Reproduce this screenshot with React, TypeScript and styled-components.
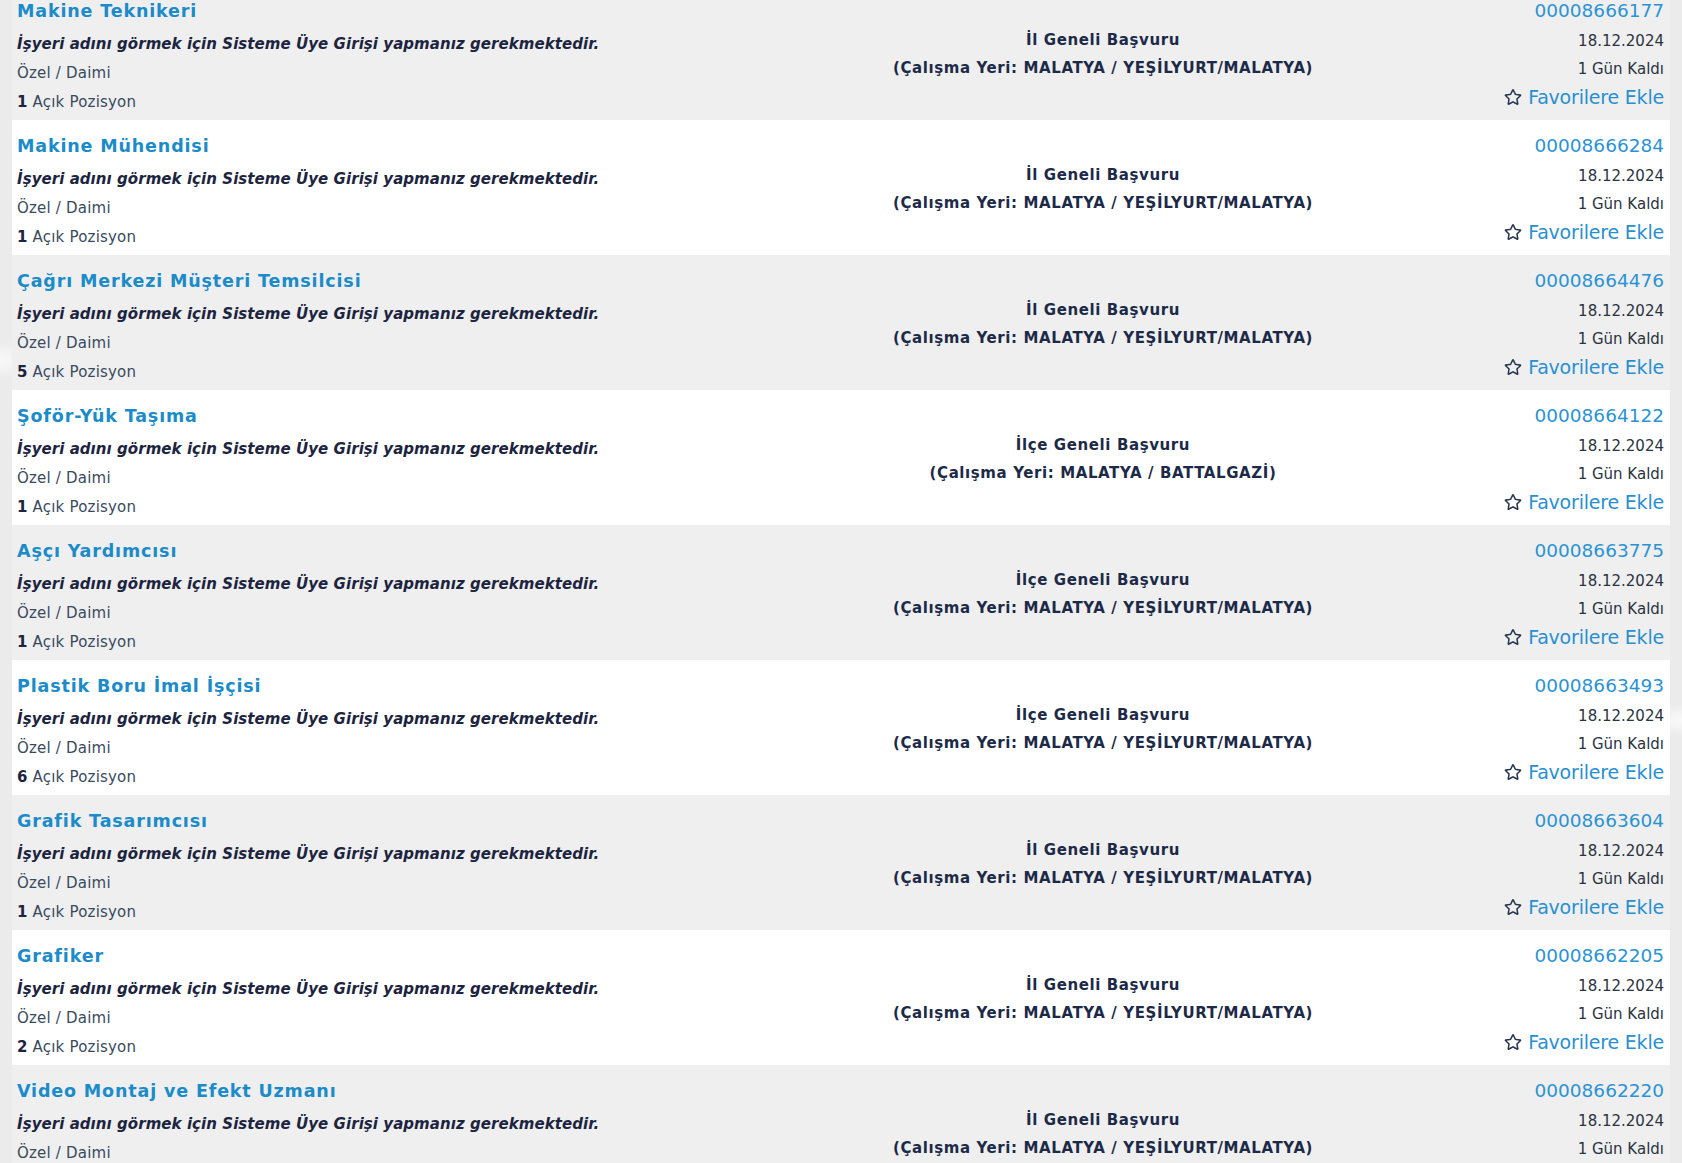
import React from "react";
import styled, { createGlobalStyle } from "styled-components";
import { FaRegStar } from "react-icons/fa";

const GlobalStyle = createGlobalStyle`
  html, body { margin: 0; padding: 0; }
  body {
    background-color: #ebebeb;
    background-image:
      radial-gradient(ellipse at 0% 30%, rgba(255,255,255,0.7) 0, rgba(255,255,255,0) 40px),
      radial-gradient(ellipse at 100% 60%, rgba(255,255,255,0.7) 0, rgba(255,255,255,0) 40px);
    font-family: "DejaVu Sans", Verdana, sans-serif;
    overflow: hidden;
  }
`;

type Job = {
  title: string;
  scope: string;
  place: string;
  code: string;
  count: number;
};

const jobs: Job[] = [
  { title: "Makine Teknikeri", scope: "İl Geneli Başvuru", place: "MALATYA / YEŞİLYURT/MALATYA", code: "00008666177", count: 1 },
  { title: "Makine Mühendisi", scope: "İl Geneli Başvuru", place: "MALATYA / YEŞİLYURT/MALATYA", code: "00008666284", count: 1 },
  { title: "Çağrı Merkezi Müşteri Temsilcisi", scope: "İl Geneli Başvuru", place: "MALATYA / YEŞİLYURT/MALATYA", code: "00008664476", count: 5 },
  { title: "Şoför-Yük Taşıma", scope: "İlçe Geneli Başvuru", place: "MALATYA / BATTALGAZİ", code: "00008664122", count: 1 },
  { title: "Aşçı Yardımcısı", scope: "İlçe Geneli Başvuru", place: "MALATYA / YEŞİLYURT/MALATYA", code: "00008663775", count: 1 },
  { title: "Plastik Boru İmal İşçisi", scope: "İlçe Geneli Başvuru", place: "MALATYA / YEŞİLYURT/MALATYA", code: "00008663493", count: 6 },
  { title: "Grafik Tasarımcısı", scope: "İl Geneli Başvuru", place: "MALATYA / YEŞİLYURT/MALATYA", code: "00008663604", count: 1 },
  { title: "Grafiker", scope: "İl Geneli Başvuru", place: "MALATYA / YEŞİLYURT/MALATYA", code: "00008662205", count: 2 },
  { title: "Video Montaj ve Efekt Uzmanı", scope: "İl Geneli Başvuru", place: "MALATYA / YEŞİLYURT/MALATYA", code: "00008662220", count: 1 },
];

const Page = styled.div`
  margin-top: -15px;
  padding: 0 12px;
  display: flex;
  flex-direction: column;
`;

const Row = styled.div<{ $alt: boolean }>`
  display: grid;
  grid-template-columns: 830px 512px 1fr;
  height: 135px;
  box-sizing: border-box;
  padding: 0 6px 0 5px;
  background: ${(p) => (p.$alt ? "#ffffff" : "#efefef")};
`;

const Left = styled.div`
  display: flex;
  flex-direction: column;
  align-items: flex-start;
  padding-top: 9px;
`;

const Title = styled.a`
  font-weight: bold;
  font-size: 17.5px;
  letter-spacing: 0.85px;
  line-height: 35px;
  color: #1b8bc9;
  text-decoration: none;
  cursor: pointer;
`;

const Notice = styled.div`
  font-weight: bold;
  font-style: italic;
  font-size: 15px;
  letter-spacing: 0.06px;
  line-height: 31px;
  color: #1c2440;
`;

const Meta = styled.div`
  font-size: 15px;
  line-height: 27px;
  letter-spacing: 0.2px;
  color: #3a4a5e;
`;

const Positions = styled(Meta)`
  margin-top: 2px;
`;

const Count = styled.b`
  color: #1c2440;
`;

const Center = styled.div`
  display: flex;
  flex-direction: column;
  justify-content: center;
  align-items: center;
  padding-top: 3px;
  font-weight: bold;
  font-size: 15px;
  letter-spacing: 0.6px;
  line-height: 28px;
  color: #1c2a48;
`;

const Right = styled.div`
  display: flex;
  flex-direction: column;
  align-items: flex-end;
  padding-top: 10px;
`;

const Code = styled.a`
  font-size: 18.5px;
  line-height: 32px;
  color: #2b93d3;
  text-decoration: none;
  cursor: pointer;
`;

const Small = styled.div`
  font-size: 15px;
  line-height: 28px;
  color: #2a3340;
`;

const Fav = styled.a`
  display: flex;
  align-items: center;
  gap: 6px;
  font-size: 19px;
  letter-spacing: -0.2px;
  line-height: 28px;
  color: #2a8fd0;
  cursor: pointer;
  svg {
    color: #263650;
    width: 18px;
    height: 18px;
  }
`;

export default function App() {
  return (
    <>
      <GlobalStyle />
      <Page>
        {jobs.map((j, i) => (
          <Row key={j.code} $alt={i % 2 === 1}>
            <Left>
              <Title>{j.title}</Title>
              <Notice>İşyeri adını görmek için Sisteme Üye Girişi yapmanız gerekmektedir.</Notice>
              <Meta>Özel / Daimi</Meta>
              <Positions>
                <Count>{j.count}</Count> Açık Pozisyon
              </Positions>
            </Left>
            <Center>
              <div>{j.scope}</div>
              <div>(Çalışma Yeri: {j.place})</div>
            </Center>
            <Right>
              <Code>{j.code}</Code>
              <Small>18.12.2024</Small>
              <Small>1 Gün Kaldı</Small>
              <Fav>
                <FaRegStar />
                Favorilere Ekle
              </Fav>
            </Right>
          </Row>
        ))}
      </Page>
    </>
  );
}
